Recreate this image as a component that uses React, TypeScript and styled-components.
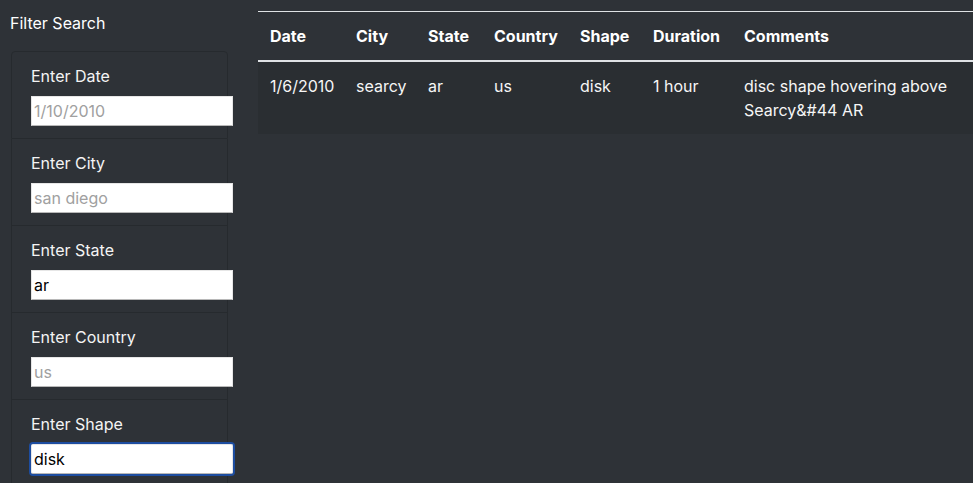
import React from "react";
import styled, { createGlobalStyle } from "styled-components";

const GlobalStyle = createGlobalStyle`
  html, body {
    margin: 0;
    padding: 0;
    background-color: #2e3237;
    color: #ffffff;
    font-family: Inter, "Noto Sans", "Liberation Sans", sans-serif;
    font-size: 16px;
    line-height: 24px;
    overflow: hidden;
  }
`;

const Page = styled.div`
  display: grid;
  grid-template-columns: 243px 1fr;
  width: 973px;
  height: 483px;
`;

const Sidebar = styled.aside`
  padding: 11px 15px 0 10px;
`;

const SidebarTitle = styled.div`
  font-size: 16px;
  line-height: 24px;
  margin-bottom: 16px;
`;

const FilterList = styled.ul`
  list-style: none;
  margin: 0 0 0 1px;
  padding: 0;
  width: 217px;
`;

const FilterItem = styled.li`
  display: flex;
  flex-direction: column;
  padding: 12px 0 12px 19px;
  border: 1px solid #262a2e;
  border-top-width: 0;
  &:first-child {
    border-top-width: 1px;
    border-radius: 4px 4px 0 0;
  }
`;

const FilterLabel = styled.label`
  line-height: 24px;
  margin-bottom: 8px;
  color: #f4f4f4;
`;

const FilterInput = styled.input<{ $focused?: boolean }>`
  box-sizing: border-box;
  width: 202px;
  height: 30px;
  padding: 0 2px;
  font-family: inherit;
  font-size: 16px;
  color: #000;
  background: #fff;
  border: 1px solid #e6e6e6;
  border-bottom-color: #b8b8b8;
  outline: none;
  border-radius: ${(p) => (p.$focused ? "2px" : "0")};
  box-shadow: ${(p) => (p.$focused ? "0 0 0 2px #1d4da0" : "none")};

  &::placeholder {
    color: #a0a0a0;
  }
`;

const Main = styled.main`
  padding: 11px 0 0 15px;
`;

const Table = styled.table`
  width: 715px;
  border-collapse: collapse;
  table-layout: fixed;
  color: #fff;
`;

const HeadCell = styled.th<{ $w: number }>`
  box-sizing: border-box;
  width: ${(p) => p.$w}px;
  text-align: left;
  font-weight: 700;
  padding: 12px;
  line-height: 24px;
  white-space: nowrap;
  border-top: 1px solid #dfe2e5;
  border-bottom: 2px solid #dfe2e5;
`;

const BodyRow = styled.tr`
  background-color: #2a2e32;
`;

const Cell = styled.td`
  padding: 12px;
  line-height: 24px;
  vertical-align: top;
  color: #f6f6f6;
`;

const filters = [
  { label: "Enter Date", value: "", placeholder: "1/10/2010" },
  { label: "Enter City", value: "", placeholder: "san diego" },
  { label: "Enter State", value: "ar", placeholder: "" },
  { label: "Enter Country", value: "", placeholder: "us" },
  { label: "Enter Shape", value: "disk", placeholder: "", focused: true },
];

const columns = [
  { name: "Date", w: 86 },
  { name: "City", w: 72 },
  { name: "State", w: 66 },
  { name: "Country", w: 86 },
  { name: "Shape", w: 73 },
  { name: "Duration", w: 91 },
  { name: "Comments", w: 241 },
];

const rows = [
  ["1/6/2010", "searcy", "ar", "us", "disk", "1 hour", "disc shape hovering above Searcy&#44 AR"],
];

export default function App() {
  return (
    <>
      <GlobalStyle />
      <Page>
        <Sidebar>
          <SidebarTitle>Filter Search</SidebarTitle>
          <FilterList>
            {filters.map((f) => (
              <FilterItem key={f.label}>
                <FilterLabel>{f.label}</FilterLabel>
                <FilterInput
                  type="text"
                  defaultValue={f.value}
                  placeholder={f.placeholder}
                  $focused={f.focused}
                />
              </FilterItem>
            ))}
          </FilterList>
        </Sidebar>
        <Main>
          <Table>
            <thead>
              <tr>
                {columns.map((c) => (
                  <HeadCell key={c.name} $w={c.w}>
                    {c.name}
                  </HeadCell>
                ))}
              </tr>
            </thead>
            <tbody>
              {rows.map((r, i) => (
                <BodyRow key={i}>
                  {r.map((v, j) => (
                    <Cell key={j}>{v}</Cell>
                  ))}
                </BodyRow>
              ))}
            </tbody>
          </Table>
        </Main>
      </Page>
    </>
  );
}
